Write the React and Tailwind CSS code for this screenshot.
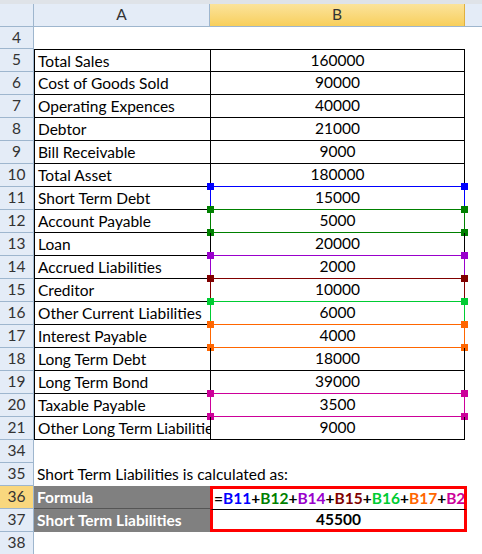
import React from "react";

const rows = [
  [5, "Total Sales", "160000"],
  [6, "Cost of Goods Sold", "90000"],
  [7, "Operating Expences", "40000"],
  [8, "Debtor", "21000"],
  [9, "Bill Receivable", "9000"],
  [10, "Total Asset", "180000"],
  [11, "Short Term Debt", "15000", "#0000ff"],
  [12, "Account Payable", "5000", "#008000"],
  [13, "Loan", "20000"],
  [14, "Accrued Liabilities", "2000", "#9900cc"],
  [15, "Creditor", "10000", "#800000"],
  [16, "Other Current Liabilities", "6000", "#00cc33"],
  [17, "Interest Payable", "4000", "#ff6600"],
  [18, "Long Term Debt", "18000"],
  [19, "Long Term Bond", "39000"],
  [20, "Taxable Payable", "3500", "#cc0099"],
  [21, "Other Long Term Liabilities", "9000"],
];

const parts = [
  ["=", "#000"], ["B11", "#0000ff"], ["+", "#000"], ["B12", "#008000"], ["+", "#000"],
  ["B14", "#9900cc"], ["+", "#000"], ["B15", "#800000"], ["+", "#000"], ["B16", "#00cc33"],
  ["+", "#000"], ["B17", "#ff6600"], ["+", "#000"], ["B20", "#cc0099"],
];

function Head({ n, sel }) {
  return (
    <div
      className={`flex w-[34px] shrink-0 items-center justify-center border-b border-r border-[#9eb6ce] ${
        sel ? "bg-[#f9d77e]" : "bg-[#e4ecf7]"
      } text-[#333]`}
    >
      {n}
    </div>
  );
}

function Sq({ c, cls }) {
  return <span className={`absolute h-[7px] w-[7px] ${cls}`} style={{ background: c }} />;
}

export default function App() {
  return (
    <div
      className="h-[554px] w-[482px] overflow-hidden bg-white text-[15.5px] leading-none text-black"
      style={{ fontFamily: "Lato, 'Open Sans', sans-serif" }}
    >
      <div className="h-[4px] bg-[#dfe3e8]" />
      <div className="flex h-[23px] border-b border-[#9eb6ce]">
        <div className="w-[34px] shrink-0 border-r border-[#9eb6ce] bg-[#e4ecf7]" />
        <div className="flex w-[176px] items-center justify-center border-r border-[#9eb6ce] bg-[#e4ecf7] text-[#333]">A</div>
        <div className="flex w-[255px] items-center justify-center border-r border-[#e0b040] bg-gradient-to-b from-[#fbe39a] to-[#f8cf5a] text-[#333]">B</div>
        <div className="flex-1 bg-[#e4ecf7]" />
      </div>
      <div className="flex h-[22px]"><Head n={4} /></div>
      {rows.map(([n, a, b, c], i) => (
        <div key={n} className="flex h-[23px]">
          <Head n={n} />
          <div className={`w-[176px] overflow-hidden whitespace-nowrap border-b border-l border-black px-[3px] pt-[4px] ${i === 0 ? "border-t" : ""}`}>{a}</div>
          <div className={`relative flex w-[255px] items-center justify-center border-b border-l border-r border-black ${i === 0 ? "border-t" : ""}`}>
            {c && (
              <>
                <span className="absolute inset-[-1px] border" style={{ borderColor: c }} />
                <Sq c={c} cls="-left-[4px] -top-[4px]" />
                <Sq c={c} cls="-right-[4px] -top-[4px]" />
                <Sq c={c} cls="-left-[4px] -bottom-[4px]" />
                <Sq c={c} cls="-right-[4px] -bottom-[4px]" />
              </>
            )}
            <span className="relative">{b}</span>
          </div>
        </div>
      ))}
      <div className="flex h-[23px]"><Head n={34} /></div>
      <div className="flex h-[23px]">
        <Head n={35} />
        <div className="whitespace-nowrap px-[3px] pt-[4px]">Short Term Liabilities is calculated as:</div>
      </div>
      <div className="flex h-[23px]">
        <Head n={36} sel />
        <div className="w-[176px] border-b border-[#555] bg-[#808080] px-[3px] pt-[4px] font-bold text-white">Formula</div>
        <div className="flex w-[257px] items-center overflow-hidden whitespace-nowrap border-x-[3px] border-t-[3px] border-[#ff0000] pl-[1px] font-bold">
          {parts.map(([t, col], k) => (
            <span key={k} style={{ color: col }}>{t}</span>
          ))}
        </div>
      </div>
      <div className="flex h-[23px]">
        <Head n={37} />
        <div className="w-[176px] bg-[#808080] px-[3px] pt-[4px] font-bold text-white">Short Term Liabilities</div>
        <div className="flex w-[257px] items-center justify-center border-x-[3px] border-b-[3px] border-t border-[#ff0000] border-t-black font-bold">45500</div>
      </div>
      <div className="flex h-[23px]"><Head n={38} /></div>
    </div>
  );
}
